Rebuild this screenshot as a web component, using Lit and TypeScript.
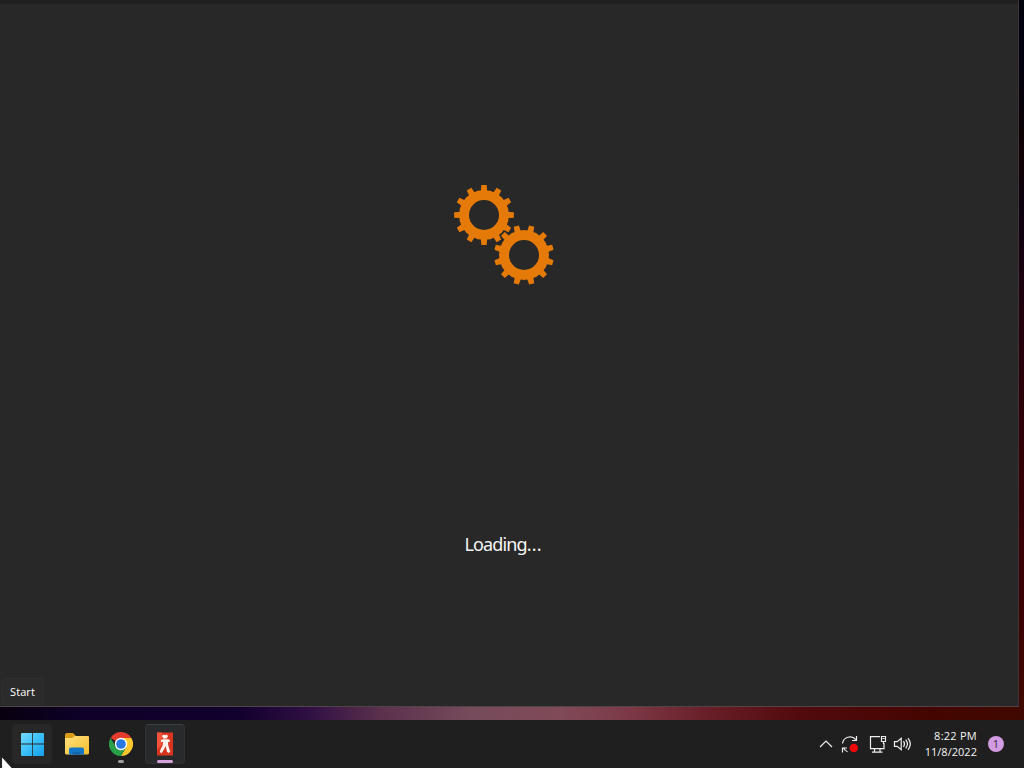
import { LitElement, html, svg, css } from "lit";
import { customElement } from "lit/decorators.js";

// outline of a 12-tooth gear centred on 0,0 with a round hole
function gearPath(offset: number) {
    const point = (r: number, deg: number) => {
        const a = (deg * Math.PI) / 180;
        return `${(r * Math.cos(a)).toFixed(2)} ${(r * Math.sin(a)).toFixed(2)}`;
    };
    const points: string[] = [];
    for (let i = 0; i < 12; i++) {
        const a = i * 30 + offset;
        points.push(point(24.8, a - 7.2), point(30, a - 5.1), point(30, a + 5.1), point(24.8, a + 7.2), point(25, a + 15));
    }
    return `M${points.join("L")}ZM15 0A15 15 0 1 0 -15 0A15 15 0 1 0 15 0Z`;
}

@customElement("loading-window")
export class LoadingWindow extends LitElement {
    static styles = css`
        :host {
            display: flex;
            flex-direction: column;
            align-items: center;
            box-sizing: border-box;
            width: 1019px;
            height: 707px;
            padding: 185px 10px 0 0;
            background: linear-gradient(#202020 0, #202020 3px, #282828 5px);
            border-right: 1px solid #403436;
            border-bottom: 1px solid #504546;
        }

        .gears {
            width: 100px;
            height: 100px;
            fill: #e67a08;
        }

        .message {
            margin: 246px 2px 0 0;
            color: #f6f6f6;
            font: 18px/26px "Noto Sans", "Open Sans", sans-serif;
            letter-spacing: -0.85px;
        }

        .dots {
            letter-spacing: 0.1px;
        }
    `;

    render() {
        return html`
            <svg class="gears" viewBox="0 0 100 100">
                ${[[30, 30, 0], [70, 70, 15]].map(([x, y, turn]) => svg`
                    <path transform="translate(${x} ${y})" fill-rule="evenodd" d=${gearPath(turn)} />
                `)}
            </svg>
            <div class="message">Loading<span class="dots">...</span></div>
        `;
    }
}

@customElement("task-bar")
export class TaskBar extends LitElement {
    static styles = css`
        :host {
            display: flex;
            justify-content: space-between;
            box-sizing: border-box;
            height: 48px;
            padding: 0 20px 0 12px;
            background: #1f1f1f;
            color: #f4f4f4;
            font: 11px/16px "Open Sans", "Noto Sans", sans-serif;
        }

        svg {
            display: block;
        }

        .apps {
            display: flex;
            align-items: center;
            gap: 4px;
        }

        .app {
            position: relative;
            display: flex;
            align-items: center;
            justify-content: center;
            box-sizing: border-box;
            width: 40px;
            height: 40px;
            padding-left: 2px;
            border-radius: 4px;
        }

        .start {
            background: #272727;
        }

        .active {
            margin-left: 1px;
            padding-left: 0;
            background: #292a2b;
            border: 1px solid #303132;
            border-top-color: #3a4145;
        }

        .dot {
            position: absolute;
            bottom: 1px;
            width: 6px;
            height: 3px;
            border-radius: 2px;
            background: #a0a0a0;
        }

        .active .dot {
            bottom: 0;
            width: 16px;
            background: #d7a3dc;
        }

        .tray {
            display: flex;
            align-items: center;
        }

        .icons {
            fill: none;
            stroke: #eeeeee;
            stroke-width: 1.2;
        }

        .clock {
            width: 63px;
            text-align: right;
            white-space: nowrap;
            letter-spacing: 0.25px;
        }

        .date {
            letter-spacing: 0.03px;
        }

        .badge {
            width: 16px;
            height: 16px;
            margin-left: 11px;
            border-radius: 50%;
            background: #d39be2;
            color: #352939;
            font-size: 11px;
            text-align: center;
        }
    `;

    render() {
        return html`
            <div class="apps">
                <div class="app start">
                    <svg width="24" height="24" viewBox="0 0 24 24">
                        <defs>
                            <linearGradient id="win" x1="0" y1="0" x2="24" y2="24" gradientUnits="userSpaceOnUse">
                                <stop offset="0" stop-color="#79dcff" />
                                <stop offset=".55" stop-color="#35bdf7" />
                                <stop offset="1" stop-color="#149be9" />
                            </linearGradient>
                        </defs>
                        <path fill="url(#win)" d="M1.2 1h10v10.5H0V2Q0 1 1.2 1M12 1h10.2Q23 1 23 2v9.5H12M0 12.5h11.2V24H1.2Q0 24 0 23M12 12.5h11V23q0 1-.8 1H12" />
                    </svg>
                </div>
                <div class="app">
                    <svg width="26" height="24" viewBox="0 0 26 24">
                        <defs>
                            <linearGradient id="folder" x1="0" y1="0" x2="1" y2="1">
                                <stop offset="0" stop-color="#ffe080" />
                                <stop offset="1" stop-color="#f5bd2c" />
                            </linearGradient>
                        </defs>
                        <path fill="#d99b16" d="M1 3q0-2 2-2h6l3 3v4H1Z" />
                        <path fill="url(#folder)" d="M1 6h7l3-2h13q1 0 1 1v16q0 1.6-1.6 1.6H2.6Q1 22.6 1 21Z" />
                        <path fill="#1476c6" d="M5 22.6v-5q0-2 2-2h11q2 0 2 2v5Z" />
                        <path fill="#1064ab" d="M8.5 20h8v2.6h-8Z" />
                    </svg>
                </div>
                <div class="app">
                    <svg width="24" height="24" viewBox="0 0 24 24">
                        <path fill="#e33b2e" d="M12 12 1.6 6A12 12 0 0 1 22.4 6Z" />
                        <path fill="#fdc72d" d="M12 6H22.4A12 12 0 0 1 12 24L17.2 15Z" />
                        <path fill="#2a9f4b" d="M1.6 6 6.8 15 12 18 17.2 15 12 24A12 12 0 0 1 1.6 6Z" />
                        <circle cx="12" cy="12" r="6.2" fill="#fff" />
                        <circle cx="12" cy="12" r="4.8" fill="#2878e4" />
                    </svg>
                    <span class="dot"></span>
                </div>
                <div class="app active">
                    <svg width="16" height="24" viewBox="0 0 16 24">
                        <path fill="#d93420" d="M0 .5h16v23H0Z" />
                        <path fill="#f2533b" d="M0 .5h5v12L0 18Z" />
                        <path fill="#fff3ec" d="M5 4 6.4 2.6 8 3.2l1.6-.6L11 4 9.8 6.4H6.2ZM3.8 8.2 5.5 7.2h6l1.6 1-.6 1.8-1.5.1.3 3.4 2 6.3-1.6 1.2-1.7-1.3L8.6 14 7.2 17 4.6 21.2 2.8 20l1-3.2 2-3.8.2-2.9-1.8-.2Z" />
                    </svg>
                    <span class="dot"></span>
                </div>
            </div>
            <div class="tray">
                <svg class="icons" width="96" height="24" viewBox="0 0 96 24">
                    <path d="m2 15 6-6 6 6" />
                    <path d="M24.5 11.5a7.6 7.6 0 0 1 13.2-4M38.5 4v4.5H34M29.5 19.7a8 8 0 0 1-4.2-4.2M24.5 20.5V16h4.5" />
                    <circle cx="35.8" cy="16" r="4.2" fill="#f00808" stroke="none" />
                    <path d="M62 4.6H52.5v12H66V11M56.5 17v3.3M62 17v3.3M54 20.2h10.5M63.5 4.5h4v5h-4ZM65.5 9.5V12M64.5 6.5h2" />
                    <path d="M76.5 9.7h2.7l4-3.4v11.4l-4-3.4h-2.7ZM85.5 9.2q2 2.8 0 5.6M87.7 7.7q3.4 4.3 0 8.6M90 6.2q4.6 5.8 0 11.6" />
                </svg>
                <div class="clock">
                    <div>8:22 PM</div>
                    <div class="date">11/8/2022</div>
                </div>
                <div class="badge">1</div>
            </div>
        `;
    }
}

@customElement("app-root")
export class AppRoot extends LitElement {
    static styles = css`
        :host {
            position: relative;
            display: flex;
            flex-direction: column;
            justify-content: space-between;
            width: 1024px;
            height: 768px;
            overflow: hidden;
            background: #1f1f1f;
        }

        .desktop {
            height: 720px;
            background:
                linear-gradient(90deg, #08000f 0, #0e0028 80px, #12002e 240px, #301044 310px, #5a304c 380px, #764b5b 470px, #804a58 560px, #7c3846 630px, #681e27 710px, #520a0d 800px, #440500 930px, #400900) 0 100% / 100% 13px no-repeat,
                linear-gradient(#00000d 0, #02000f 65px, #080008 110px, #100003 160px, #0c0011 210px, #22000c 320px, #330007 470px, #390004 600px, #400900);
        }

        .tooltip {
            position: absolute;
            left: 1px;
            top: 678px;
            box-sizing: border-box;
            width: 43px;
            height: 27px;
            border: 1px solid #2e2e2e;
            border-radius: 3px;
            background: #2b2b2b;
            color: #fff;
            font: 11px/26px "Open Sans", "Noto Sans", sans-serif;
            letter-spacing: 0.1px;
            text-align: center;
        }

        .cursor {
            position: absolute;
            left: 1px;
            top: 756px;
        }
    `;

    render() {
        return html`
            <div class="desktop">
                <loading-window></loading-window>
            </div>
            <task-bar></task-bar>
            <div class="tooltip">Start</div>
            <svg class="cursor" width="13" height="12" viewBox="0 0 13 12">
                <path fill="#fff" stroke="#111" stroke-width=".8" d="M.6.6V14H13Z" />
            </svg>
        `;
    }
}
